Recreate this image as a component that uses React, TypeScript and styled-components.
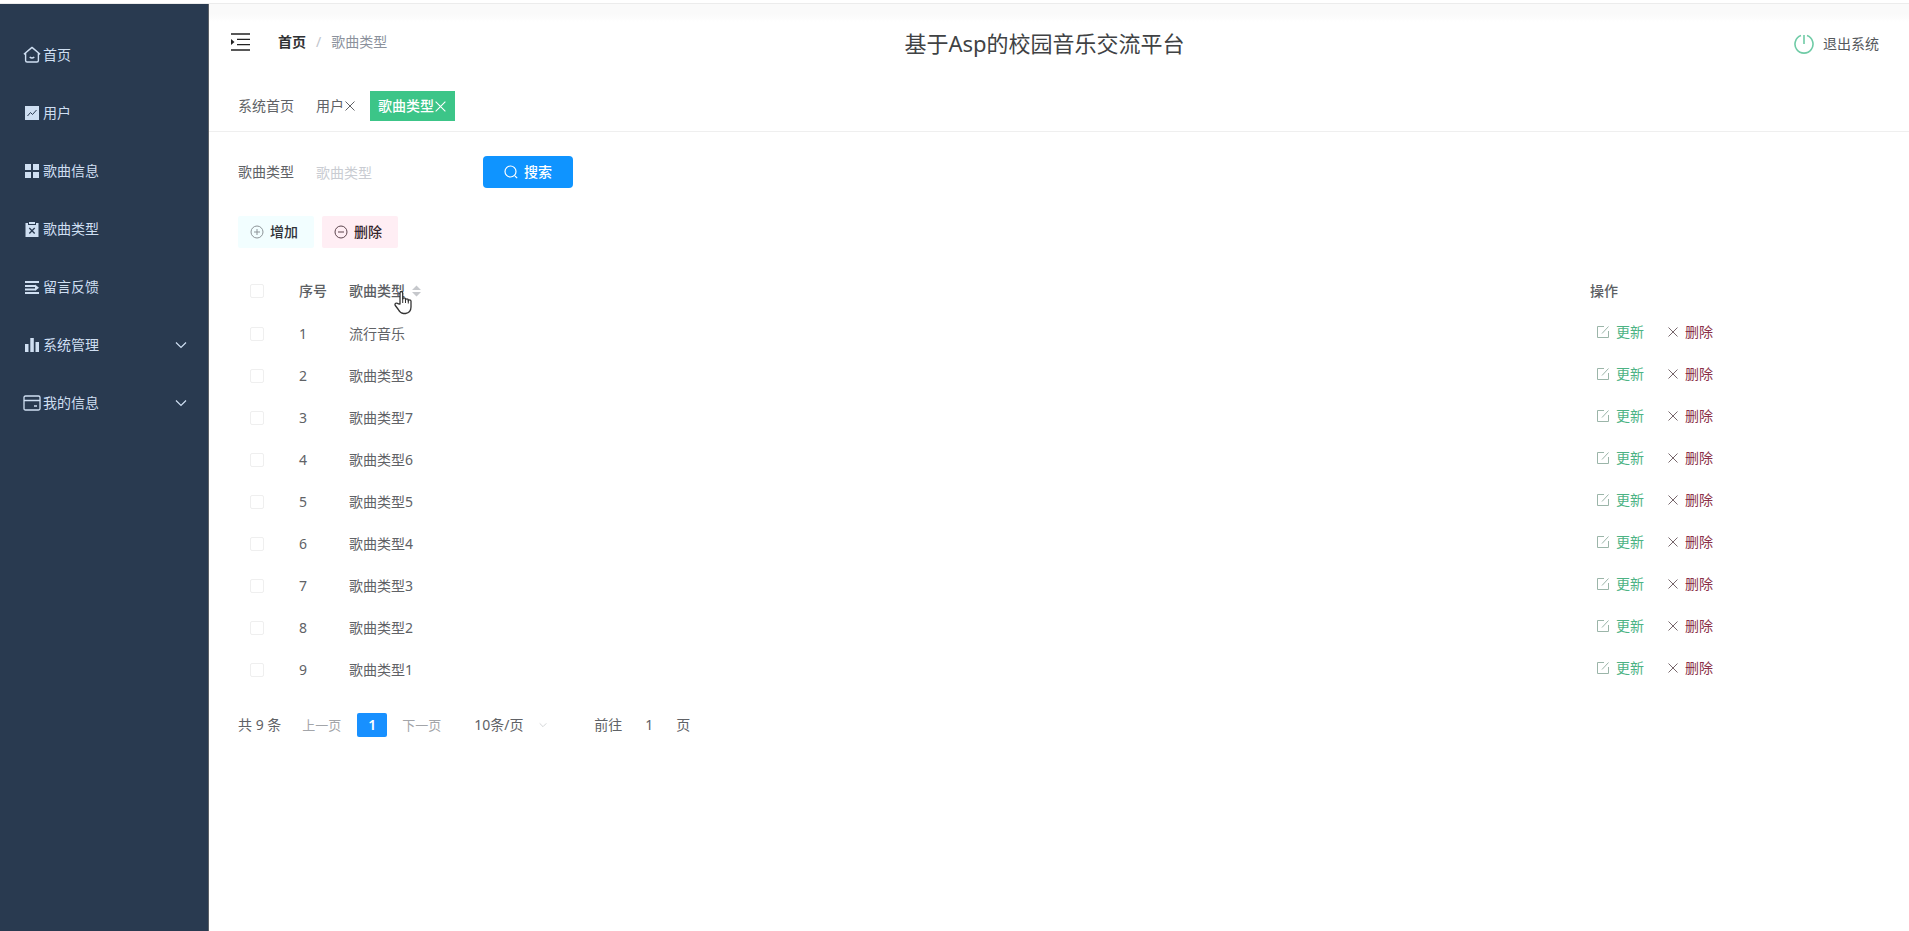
import React from "react";
import styled, { createGlobalStyle, css } from "styled-components";

const GlobalStyle = createGlobalStyle`
  *, *::before, *::after { box-sizing: border-box; }
  body {
    margin: 0;
    background: #fff;
    color: #606266;
    font-family: "Noto Sans", "Noto Sans CJK SC", sans-serif;
    font-size: 14px;
    line-height: 20px;
  }
  button, input, select { font: inherit; color: inherit; }
`;

const Page = styled.div`
  display: flex;
  flex-direction: column;
  min-height: 100vh;
`;
const TopEdge = styled.div`
  height: 4px;
  border-bottom: 1px solid #ececec;
`;
const Body = styled.div`
  display: flex;
  flex: 1;
`;
const Sidebar = styled.nav`
  width: 209px;
  flex: none;
  padding-top: 22px;
  background: #293a50;
  border-right: 1px solid #5d6167;
`;
const Menu = styled.ul`
  list-style: none;
  margin: 0;
  padding: 0;
  display: grid;
  row-gap: 0;
`;
const MenuLink = styled.a`
  display: flex;
  align-items: center;
  gap: 2px;
  height: 58px;
  padding: 0 21px 0 23px;
  color: #cfdff2;
  text-decoration: none;
`;
const MenuText = styled.span`
  flex: 1;
`;
const Svg = styled.svg<{ $size: number }>`
  display: block;
  flex: none;
  width: ${(p) => p.$size}px;
  height: ${(p) => p.$size}px;
  fill: none;
  stroke: currentColor;
  stroke-width: 1;
`;
const Main = styled.main`
  flex: 1;
  min-width: 0;
`;
const Header = styled.header`
  background: linear-gradient(#fafafa 0, #fafafa 10px, #fff 18px);
  border-bottom: 1px solid #efefef;
`;
const HeaderBar = styled.div`
  display: grid;
  grid-template-columns: 1fr auto 1fr;
  align-items: center;
  height: 80px;
  padding: 0 30px 0 21px;
`;
const Crumbs = styled.div`
  display: flex;
  align-items: center;
  gap: 10px;
  padding-bottom: 4px;
  color: #8b919c;
`;
const CollapseButton = styled.button`
  display: block;
  margin-right: 18px;
  padding: 0;
  border: 0;
  background: none;
  color: #222;
`;
const HomeCrumb = styled.a`
  color: #303133;
  font-weight: 600;
  text-decoration: none;
`;
const Slash = styled.span`
  color: #c0c4cc;
`;
const Title = styled.h1`
  margin: 0 20px 2px 0;
  color: #404244;
  font-size: 22px;
  line-height: 30px;
  font-weight: 400;
`;
const Logout = styled.button`
  display: flex;
  align-items: center;
  justify-self: end;
  gap: 9px;
  padding: 0;
  border: 0;
  background: none;
  color: #55585c;
  svg { color: #6fcba6; }
`;
const Tabs = styled.div`
  display: flex;
  gap: 6px;
  padding: 7px 21px 10px;
`;
const Tab = styled.a<{ $active?: boolean }>`
  display: flex;
  align-items: center;
  height: 30px;
  padding: 0 8px;
  color: #606266;
  text-decoration: none;
  ${(p) => p.$active && css`
    background: #3cc588;
    color: #fff;
    font-weight: 500;
  `}
`;
const Content = styled.section`
  padding: 24px 29px;
`;
const SearchForm = styled.form`
  display: flex;
  align-items: center;
`;
const SearchInput = styled.input`
  width: 180px;
  height: 32px;
  margin: 0 9px 0 0;
  padding: 0 22px;
  border: 0;
  outline: 0;
  background: transparent;
  &::placeholder { color: #c9ccd2; opacity: 1; }
`;
const Button = styled.button<{ $tone: "primary" | "add" | "remove" }>`
  display: flex;
  align-items: center;
  justify-content: center;
  gap: 6px;
  height: 32px;
  padding: 0 8px;
  border: 0;
  border-radius: 2px;
  font-weight: 500;
  ${(p) => p.$tone === "primary" && css`
    width: 90px;
    border-radius: 4px;
    background: #0f94ff;
    color: #fff;
  `}
  ${(p) => p.$tone === "add" && css`
    width: 76px;
    padding-right: 12px;
    background: #f2feff;
    color: #303238;
    svg { color: #8d9498; }
  `}
  ${(p) => p.$tone === "remove" && css`
    width: 76px;
    padding-right: 12px;
    background: #ffeef4;
    color: #35262c;
    svg { color: #5c454d; }
  `}
`;
const Toolbar = styled.div`
  display: flex;
  gap: 8px;
  padding: 28px 0 20px;
`;
const Table = styled.table`
  width: 100%;
  table-layout: fixed;
  border-collapse: collapse;
  text-align: left;
  white-space: nowrap;
  th, td { height: 42px; padding: 0 12px; }
  th { height: 45px; font-weight: 500; color: #5c5f64; }
`;
const Col = styled.col<{ $width?: number }>`
  width: ${(p) => (p.$width ? p.$width + "px" : "auto")};
`;
const Check = styled.input`
  display: block;
  appearance: none;
  width: 14px;
  height: 14px;
  margin: 0;
  border: 1px solid #efefef;
  border-radius: 2px;
`;
const SortHead = styled.div`
  position: relative;
  display: inline-flex;
  align-items: center;
  gap: 7px;
`;
const SortArrows = styled.svg`
  width: 9px;
  height: 12px;
  fill: #c6c8cc;
`;
const Pointer = styled.svg`
  position: absolute;
  left: 45px;
  top: 9px;
  width: 20px;
  height: 25px;
`;
const Actions = styled.div`
  display: flex;
  gap: 23px;
  padding: 0 6px 4px;
`;
const Action = styled.button<{ $danger?: boolean }>`
  display: flex;
  align-items: center;
  gap: 6px;
  padding: 0;
  border: 0;
  background: none;
  color: ${(p) => (p.$danger ? "#8a3048" : "#4bb384")};
  svg { color: ${(p) => (p.$danger ? "#77676c" : "#9bb5a9")}; }
`;
const Pagination = styled.div`
  display: flex;
  align-items: center;
  padding-top: 22px;
`;
const PageStep = styled.button`
  margin: 0 16px 0 21px;
  padding: 0;
  border: 0;
  background: none;
  color: #a3a5a9;
  font-size: 13px;
`;
const PageNumber = styled.button`
  width: 30px;
  height: 24px;
  margin-right: -6px;
  padding: 0;
  border: 0;
  border-radius: 2px;
  background: #1890ff;
  color: #fff;
  font-weight: 600;
`;
const PageSize = styled.select`
  appearance: none;
  width: 59px;
  padding: 0;
  border: 0;
  background: none;
`;
const SizeBox = styled.label`
  display: flex;
  align-items: center;
  gap: 6px;
  margin: 0 47px 0 17px;
  svg { color: #c8cacd; }
`;
const Jump = styled.label`
  display: flex;
  align-items: center;
`;
const JumpInput = styled.input`
  width: 54px;
  padding: 0;
  border: 0;
  background: none;
  text-align: center;
`;

const Close = ({ size = 12 }: { size?: number }) => (
  <Svg $size={size} viewBox="0 0 12 12"><path d="M1.5 1.5l9 9m0-9l-9 9" /></Svg>
);
const Chevron = ({ size = 12 }: { size?: number }) => (
  <Svg $size={size} viewBox="0 0 12 12"><path strokeWidth="1.2" d="M1 3.5l5 5 5-5" /></Svg>
);

const menu: { label: string; icon: React.ReactNode; nested?: boolean }[] = [
  { label: "首页", icon: <path strokeWidth="1.4" strokeLinejoin="round" d="M2.6 7.300v7.200q0 1.500 1.500 1.500h9.800q1.500 0 1.500-1.500V7.300M.9 8.300L9 1.400l8.100 6.900M6.700 11q2.300 2 4.600 0" /> },
  { label: "用户", icon: <><rect x="2" y="2" width="14" height="14" fill="currentColor" stroke="none" /><path stroke="#293a50" d="M4.500 12l3-3.500 2 2L13.500 6" /></> },
  { label: "歌曲信息", icon: <path fill="currentColor" stroke="none" d="M2 2h6v6H2zM10 2h6v6h-6zM2 10h6v6H2zM10 10h6v6h-6z" /> },
  { label: "歌曲类型", icon: <><path fill="currentColor" stroke="none" d="M2.500 3H5v2h8V3h2.500v14h-13zM6 2h6v2H6z" /><path stroke="#293a50" strokeWidth="1.300" d="M6.300 8l5.400 5.500m0-5.500l-5.400 5.500" /></> },
  { label: "留言反馈", icon: <><path strokeWidth="2" d="M2 4h14M2 15h14" /><path strokeWidth="1.800" d="M2 8h10M2 11.500h10" /><path fill="currentColor" stroke="none" d="M12 6.500l4 3.200-4 3.300z" /></> },
  { label: "系统管理", nested: true, icon: <path fill="currentColor" stroke="none" d="M2 8h3.500v8H2zM7.300 2h3.500v14H7.300zM12.500 6H16v10h-3.500z" /> },
  { label: "我的信息", nested: true, icon: <path strokeWidth="1.300" d="M2.500 2h13q1.500 0 1.500 1.500v11q0 1.500-1.500 1.500h-13Q1 16 1 14.500v-11Q1 2 2.500 2zM1 6.500h16M11 12h3" /> },
];
const types = ["流行音乐", "歌曲类型8", "歌曲类型7", "歌曲类型6", "歌曲类型5", "歌曲类型4", "歌曲类型3", "歌曲类型2", "歌曲类型1"];

export default function App() {
  return (
    <Page>
      <GlobalStyle />
      <TopEdge />
      <Body>
        <Sidebar>
          <Menu>
            {menu.map((m) => (
              <li key={m.label}>
                <MenuLink href="#">
                  <Svg $size={18} viewBox="0 0 18 18">{m.icon}</Svg>
                  <MenuText>{m.label}</MenuText>
                  {m.nested && <Chevron />}
                </MenuLink>
              </li>
            ))}
          </Menu>
        </Sidebar>
        <Main>
          <Header>
            <HeaderBar>
              <Crumbs>
                <CollapseButton aria-label="折叠菜单">
                  <Svg $size={20} viewBox="0 0 20 20">
                    <path strokeWidth="1.300" d="M1 2h19M7 7.300h13M7 12.600h13M1 18h19" />
                    <path fill="currentColor" stroke="none" d="M1 7l3.500 3L1 13z" />
                  </Svg>
                </CollapseButton>
                <HomeCrumb href="#">首页</HomeCrumb>
                <Slash>/</Slash>
                <span>歌曲类型</span>
              </Crumbs>
              <Title>基于Asp的校园音乐交流平台</Title>
              <Logout>
                <Svg $size={20} viewBox="0 0 20 20">
                  <path strokeWidth="1.600" d="M7 1.600a9 9 0 1 0 6 0M10 1v9" />
                </Svg>
                退出系统
              </Logout>
            </HeaderBar>
            <Tabs>
              <Tab href="#">系统首页</Tab>
              <Tab href="#">用户<Close /></Tab>
              <Tab href="#" $active>歌曲类型<Close size={13} /></Tab>
            </Tabs>
          </Header>
          <Content>
            <SearchForm onSubmit={(e) => e.preventDefault()}>
              <label htmlFor="type">歌曲类型</label>
              <SearchInput id="type" placeholder="歌曲类型" />
              <Button $tone="primary">
                <Svg $size={14} viewBox="0 0 14 14"><path strokeWidth="1.200" d="M11 11l2.200 2.200M12 6.500a5.500 5.500 0 1 1-11 0 5.500 5.500 0 0 1 11 0z" /></Svg>
                搜索
              </Button>
            </SearchForm>
            <Toolbar>
              <Button $tone="add">
                <Svg $size={14} viewBox="0 0 14 14"><circle cx="7" cy="7" r="6" /><path d="M4 7h6M7 4v6" /></Svg>
                增加
              </Button>
              <Button $tone="remove">
                <Svg $size={14} viewBox="0 0 14 14"><circle cx="7" cy="7" r="6" /><path d="M4 7h6" /></Svg>
                删除
              </Button>
            </Toolbar>
            <Table>
              <colgroup>
                <Col $width={49} />
                <Col $width={50} />
                <Col />
                <Col $width={302} />
              </colgroup>
              <thead>
                <tr>
                  <th><Check type="checkbox" aria-label="全选" /></th>
                  <th>序号</th>
                  <th>
                    <SortHead>
                      歌曲类型
                      <SortArrows viewBox="0 0 9 12"><path d="M4.500 0.500L9 5H0zM4.500 11.500L0 7h9z" /></SortArrows>
                      <Pointer viewBox="0 0 20 25">
                        <path fill="#fff" stroke="#333" strokeWidth="1.300" strokeLinejoin="round" d="M6 14V3q0-1.500 1.300-1.500T8.700 3v6q0-1.200 1.400-1.200T11.500 9v1q0-1.200 1.400-1.200t1.400 1.200v1q0-1.200 1.300-1.200T17 11v6q0 5.500-5.500 6.500H9.500Q6 23 4.300 19.500L1.300 15.500q-.8-1.500.4-2.200t2.500.5z" />
                        <path fill="none" stroke="#333" d="M8.700 8v5M11.500 9v4M14.300 10v3.500" />
                      </Pointer>
                    </SortHead>
                  </th>
                  <th>操作</th>
                </tr>
              </thead>
              <tbody>
                {types.map((t, i) => (
                  <tr key={t}>
                    <td><Check type="checkbox" aria-label={t} /></td>
                    <td>{i + 1}</td>
                    <td>{t}</td>
                    <td>
                      <Actions>
                        <Action>
                          <Svg $size={14} viewBox="0 0 14 14"><path d="M8 1.500H1.500v11h11V6M6 8.500L12.500 1.500" /></Svg>
                          更新
                        </Action>
                        <Action $danger><Close />删除</Action>
                      </Actions>
                    </td>
                  </tr>
                ))}
              </tbody>
            </Table>
            <Pagination>
              <span>共 9 条</span>
              <PageStep>上一页</PageStep>
              <PageNumber>1</PageNumber>
              <PageStep>下一页</PageStep>
              <SizeBox>
                <PageSize aria-label="每页条数"><option>10条/页</option></PageSize>
                <Chevron size={8} />
              </SizeBox>
              <Jump>前往<JumpInput defaultValue="1" />页</Jump>
            </Pagination>
          </Content>
        </Main>
      </Body>
    </Page>
  );
}
